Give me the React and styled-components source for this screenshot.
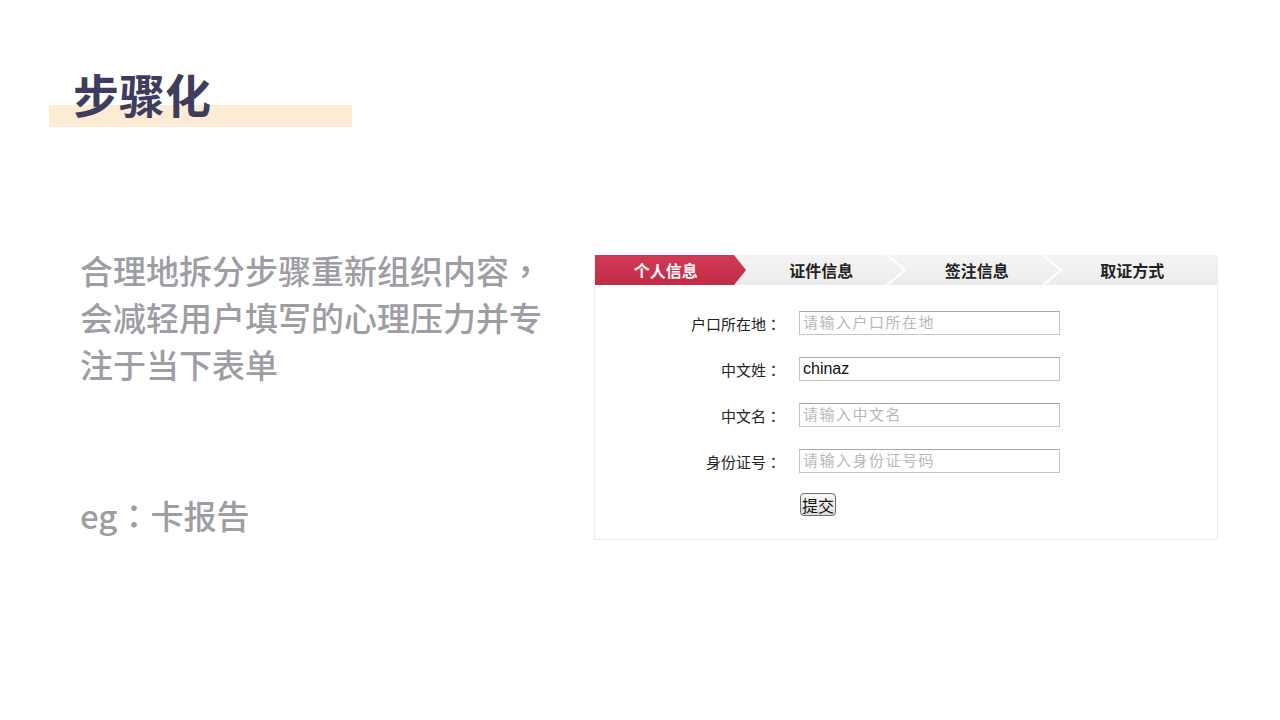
import React from 'react'
import styled, { createGlobalStyle } from 'styled-components'

const GlobalStyle = createGlobalStyle`
  html, body {
    margin: 0;
    padding: 0;
    background: #ffffff;
  }
  body {
    font-family: "Noto Sans CJK SC", "Noto Sans", sans-serif;
  }
`

const Page = styled.div`
  width: 1280px;
  height: 720px;
  overflow: hidden;
  background: #ffffff;
`

const TitleBlock = styled.div`
  margin: 68px 0 0 49px;
  width: 303px;
  height: 59px;
  padding-left: 24px;
  box-sizing: border-box;
  background: linear-gradient(to bottom, transparent 37px, #fdebd3 37px);
`

const Title = styled.h1`
  margin: 0;
  font-size: 46px;
  line-height: 50px;
  font-weight: 700;
  color: #3e3d5d;
`

const Content = styled.div`
  display: flex;
  align-items: flex-start;
  margin-top: 120px;
`

const Intro = styled.div`
  flex: 0 0 594px;
  padding-left: 80px;
  box-sizing: border-box;
  color: #9d9da3;
  font-size: 33px;
  line-height: 47px;
  font-weight: 500;
`

const Paragraph = styled.p`
  margin: 0;
`

const Example = styled.p`
  margin: 104px 0 0;
`

const Punct = styled.span`
  font-family: "Noto Sans CJK TC", sans-serif;
`

const Panel = styled.div`
  flex: 0 0 624px;
  margin-top: 8px;
  height: 285px;
  box-sizing: border-box;
  background: #ffffff;
  border: 1px solid #ebebeb;
  border-top: none;
`

const Steps = styled.div`
  display: flex;
  height: 30px;
  background: linear-gradient(to bottom, #f4f4f4, #ececec);
`

const Step = styled.div`
  position: relative;
  flex: 1;
  display: flex;
  align-items: center;
  justify-content: center;
  padding-right: 14px;
  font-size: 16px;
  font-weight: 700;
  color: ${p => (p.$active ? '#ffffff' : '#222222')};
  background: ${p => (p.$active ? 'linear-gradient(to bottom, #d03a55, #c22b45)' : 'transparent')};
  clip-path: ${p => (p.$active ? 'polygon(0 0, 139px 0, 151px 50%, 139px 100%, 0 100%)' : 'none')};
`

const Chevron = styled.svg`
  position: absolute;
  right: -1px;
  top: 0;
  width: 22px;
  height: 30px;
`

const Form = styled.div`
  display: flex;
  flex-direction: column;
  gap: 22px;
  padding-top: 26px;
`

const Row = styled.div`
  display: flex;
  align-items: center;
  gap: 18px;
`

const Label = styled.label`
  width: 186px;
  text-align: right;
  font-size: 15px;
  color: #222222;
`

const Input = styled.input`
  width: 261px;
  height: 24px;
  box-sizing: border-box;
  border: 1px solid #c4c4c4;
  border-top-color: #a8a8a8;
  padding: 0 3px;
  font-size: 16px;
  font-family: "Liberation Sans", "Noto Sans CJK SC", sans-serif;
  color: #111111;
  outline: none;
  &::placeholder {
    color: #b8b8b8;
    font-family: "Noto Sans CJK SC", sans-serif;
    font-size: 15px;
    letter-spacing: 1.5px;
  }
`

const Submit = styled.button`
  margin-left: 205px;
  margin-top: -2px;
  width: 36px;
  height: 23px;
  padding: 0;
  border: 1px solid #6e6e6e;
  border-radius: 4px;
  background: linear-gradient(to bottom, #fafafa, #dedede);
  font-family: "Noto Sans CJK SC", sans-serif;
  font-size: 16px;
  line-height: 20px;
  color: #111111;
`

const steps = ['个人信息', '证件信息', '签注信息', '取证方式']

const fields = [
  { label: '户口所在地', placeholder: '请输入户口所在地' },
  { label: '中文姓', value: 'chinaz' },
  { label: '中文名', placeholder: '请输入中文名' },
  { label: '身份证号', placeholder: '请输入身份证号码' }
]

function App () {
  return (
    <Page>
      <GlobalStyle />
      <TitleBlock>
        <Title>步骤化</Title>
      </TitleBlock>
      <Content>
        <Intro>
          <Paragraph>
            合理地拆分步骤重新组织内容<Punct>，</Punct><br />
            会减轻用户填写的心理压力并专<br />
            注于当下表单
          </Paragraph>
          <Example>eg<Punct>：</Punct>卡报告</Example>
        </Intro>
        <Panel>
          <Steps>
            {steps.map((s, i) => (
              <Step key={s} $active={i === 0}>
                {s}
                {i > 0 && i < steps.length - 1 && (
                  <Chevron viewBox='0 0 22 30'>
                    <polyline points='2,0 20,15 2,30' fill='none' stroke='#ffffff' strokeWidth='2' />
                  </Chevron>
                )}
              </Step>
            ))}
          </Steps>
          <Form>
            {fields.map(f => (
              <Row key={f.label}>
                <Label>{f.label}<Punct>：</Punct></Label>
                <Input placeholder={f.placeholder} defaultValue={f.value} />
              </Row>
            ))}
            <Submit>提交</Submit>
          </Form>
        </Panel>
      </Content>
    </Page>
  )
}

export default App
